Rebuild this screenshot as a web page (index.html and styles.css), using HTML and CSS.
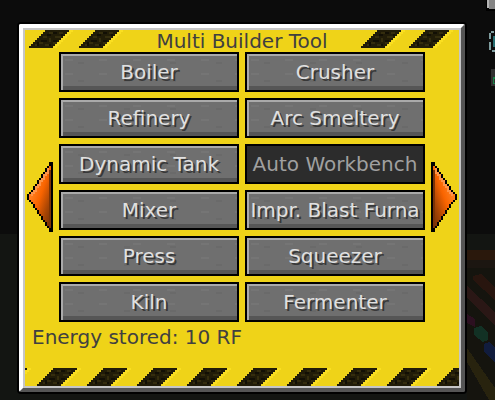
FILE: index.html
```
<!DOCTYPE html>
<html lang="en">
<head>
    <meta charset="UTF-8">
    <meta name="viewport" content="width=device-width, initial-scale=1.0">
    <title>Multi Builder Tool</title>
    <link rel="stylesheet" href="styles.css">
</head>
<body>
    <!-- game world behind the window -->
    <svg class="world" width="40" height="400" viewBox="0 0 40 400" shape-rendering="crispEdges" aria-hidden="true">
        <path fill="#2a180c" d="M12 250h28v10H12z"/>
        <path fill="#1c1611" d="M12 260h28v8H12z"/>
        <path fill="#15140e" d="M12 268h28v132H12z"/>
        <path fill="#28150e" d="M18 276l8-2 14 14v12l-22-20z"/>
        <path fill="#2a1715" d="M12 286l28 26v14L12 298z"/>
        <path fill="#2c1020" d="M12 314l8 5v8l-8-4z"/>
        <path fill="#123124" d="M19 328l7-2 7 7v7l-5 2-9-7z"/>
        <path fill="#111c3d" d="M29 344l5-2 6 6v14l-11-10z"/>
        <path fill="#28230e" d="M12 348l28 40v12h-6L12 362z"/>
        <path fill="#000" d="M31 0h9v11h-9z"/>
        <path fill="#b5b5b5" d="M32 0h2v8h-2z"/>
        <path fill="#858585" d="M34 0h6v9h-6z"/>
        <path fill="#7e9c9e" d="M34 33h2v6h-2zM36 31h3v2h-3zM34 42h2v8h-2zM37 50h3v2h-3z"/>
        <path fill="#256d70" d="M38 36h2v11h-2z"/>
        <path fill="#303030" d="M36 69h4v17h-4z"/>
        <path fill="#178044" d="M38 77h2v2h-2zM38 79h1v4h-1zM38 83h2v1h-2z"/>
    </svg>

    <svg class="defs" width="0" height="0" aria-hidden="true">
        <defs>
            <g id="stripe">
                <path fill="#fadf20" d="M40 0h4v2h-2v2h-2v2h-2v2h-2v2h-2v2h-2v2h-2v2h-2v2h-4z"/>
                <path fill="#211c08" d="M16 0h24v2h-2v2h-2v2h-2v2h-2v2h-2v2h-2v2h-2v2h-2v2H0v-2h2v-2h2v-2h2v-2h2V8h2V6h2V4h2V2h2z"/>
                <path fill="#342d0e" d="M20 2h4v2h-4zM30 2h4v2h-4zM26 6h6v2h-6zM14 6h4v2h-4zM20 8h2v4h-2zM10 12h4v2h-4zM24 12h4v2h-4zM6 14h2v2H6zM16 14h4v2h-4z"/>
                <path fill="#120f05" d="M24 2h4v2h-4zM18 4h4v2h-4zM32 4h2v2h-2zM12 10h6v2h-6zM24 10h4v2h-4zM8 12h2v4H8zM20 14h2v2h-2z"/>
            </g>
            <pattern id="hazard" x="12" width="50" height="18" patternUnits="userSpaceOnUse">
                <use href="#stripe"/>
            </pattern>
            <linearGradient id="orange" x1="0" y1="0" x2="1" y2="1">
                <stop offset=".3" stop-color="#ff7d1c"/>
                <stop offset=".5" stop-color="#f96400"/>
                <stop offset=".75" stop-color="#a84504"/>
                <stop offset="1" stop-color="#6b2d05"/>
            </linearGradient>
            <g id="arrow">
                <path d="M26 0h-4v4h-2v2h-2v4h-2v2h-2v4h-2v2h-2v4H8v2H6v4H4v2H2v2H0v6h2v2h2v2h2v4h2v2h2v4h2v2h2v4h2v2h2v4h2v2h2v4h4z"/>
                <path fill="url(#orange)" d="M24 4h-2v2h-2v4h-2v2h-2v4h-2v2h-2v4h-2v2H8v4H6v2H4v2H2v6h2v2h2v2h2v4h2v2h2v4h2v2h2v4h2v2h2v4h2v2h2z"/>
                <path fill="#ff9448" d="M22 6h-2v4h-2v2h-2v4h-2v2h-2v4h-2v2H8v4H6v2H4v4h2v-2h2v-2h2v-4h2v-2h2v-4h2v-2h2v-4h2v-2h2z"/>
                <path fill="#7a3305" d="M22 8h2v58h-2z"/>
            </g>
        </defs>
    </svg>

    <main class="window">
        <div class="window-body">
            <header class="header">
                <svg class="corner" width="100" height="18" shape-rendering="crispEdges" aria-hidden="true">
                    <use href="#stripe" x="4"/>
                    <use href="#stripe" x="54"/>
                </svg>
                <h1 class="title">Multi Builder Tool</h1>
                <svg class="corner" width="100" height="18" shape-rendering="crispEdges" aria-hidden="true">
                    <use href="#stripe" x="2"/>
                    <use href="#stripe" x="50"/>
                </svg>
            </header>

            <div class="picker">
                <button class="arrow-btn" aria-label="Previous page">
                    <svg width="26" height="70" shape-rendering="crispEdges"><use href="#arrow"/></svg>
                </button>
                <div class="machines">
                    <button class="btn">Boiler</button>
                    <button class="btn">Crusher</button>
                    <button class="btn">Refinery</button>
                    <button class="btn">Arc Smeltery</button>
                    <button class="btn">Dynamic Tank</button>
                    <button class="btn" disabled>Auto Workbench</button>
                    <button class="btn">Mixer</button>
                    <button class="btn">Impr. Blast Furna</button>
                    <button class="btn">Press</button>
                    <button class="btn">Squeezer</button>
                    <button class="btn">Kiln</button>
                    <button class="btn">Fermenter</button>
                </div>
                <button class="arrow-btn next" aria-label="Next page">
                    <svg width="26" height="70" shape-rendering="crispEdges"><use href="#arrow"/></svg>
                </button>
            </div>

            <p class="energy">Energy stored: 10 RF</p>

            <svg class="hazard" width="100%" height="18" shape-rendering="crispEdges" aria-hidden="true">
                <rect width="100%" height="18" fill="url(#hazard)"/>
            </svg>
        </div>
    </main>
</body>
</html>
```
FILE: styles.css
```
* {
    box-sizing: border-box;
}

body {
    margin: 0;
    min-height: 100vh;
    padding: 24px 30px 8px 19px;
    background: linear-gradient(#0c0c0c 234px, #131512 234px);
    font-family: "DejaVu Sans", sans-serif;
    font-size: 20px;
    color: #404040;
}

/* scenery, sits behind the window */
.world {
    position: absolute;
    top: 0;
    right: 0;
    z-index: -1;
}

.defs {
    position: absolute;
}

.window {
    border: 4px solid;
    border-color: #fff #555 #555 #fff;
    border-radius: 2px;
    box-shadow: 0 0 0 2px #000;
}

.window-body {
    border: 2px solid #c6c6c6;
    background: #efd318;
}

.header {
    display: flex;
    justify-content: space-between;
    align-items: flex-start;
    height: 22px;
}

.title {
    margin: 0;
    font-size: 20px;
    font-weight: normal;
    line-height: 22px;
    white-space: nowrap;
}

.picker {
    display: flex;
    align-items: center;
    gap: 6px;
    padding: 0 2px;
}

.machines {
    flex: 1;
    display: grid;
    grid-template-columns: 1fr 1fr;
    gap: 6px;
    min-width: 0;
}

.btn {
    height: 40px;
    min-width: 0;
    padding: 0;
    border: 2px solid #000;
    background-color: #6f6f6f;
    /* stone grain */
    background-image:
        radial-gradient(ellipse 5px 1px at 8px 6px, #757575 99%, transparent),
        radial-gradient(ellipse 4px 1px at 20px 9px, #6a6a6a 99%, transparent);
    background-size: 34px 14px, 46px 18px;
    box-shadow: inset 2px 2px #aaa, inset 0 -4px #565656;
    font-family: inherit;
    font-size: 20px;
    line-height: 36px;
    color: #e0e0e0;
    text-shadow: 2px 2px #383838;
    white-space: nowrap;
    overflow: hidden;
}

.btn:disabled {
    background: #2c2c2c;
    box-shadow: none;
    color: #a0a0a0;
    text-shadow: none;
}

.arrow-btn {
    flex: none;
    margin: 20px 0 0;
    padding: 0;
    border: 0;
    background: none;
}

.arrow-btn svg {
    display: block;
}

.next svg {
    transform: scaleX(-1);
}

.energy {
    margin: 0 0 16px;
    padding: 0 7px;
    line-height: 30px;
}

.hazard {
    display: block;
}
```
